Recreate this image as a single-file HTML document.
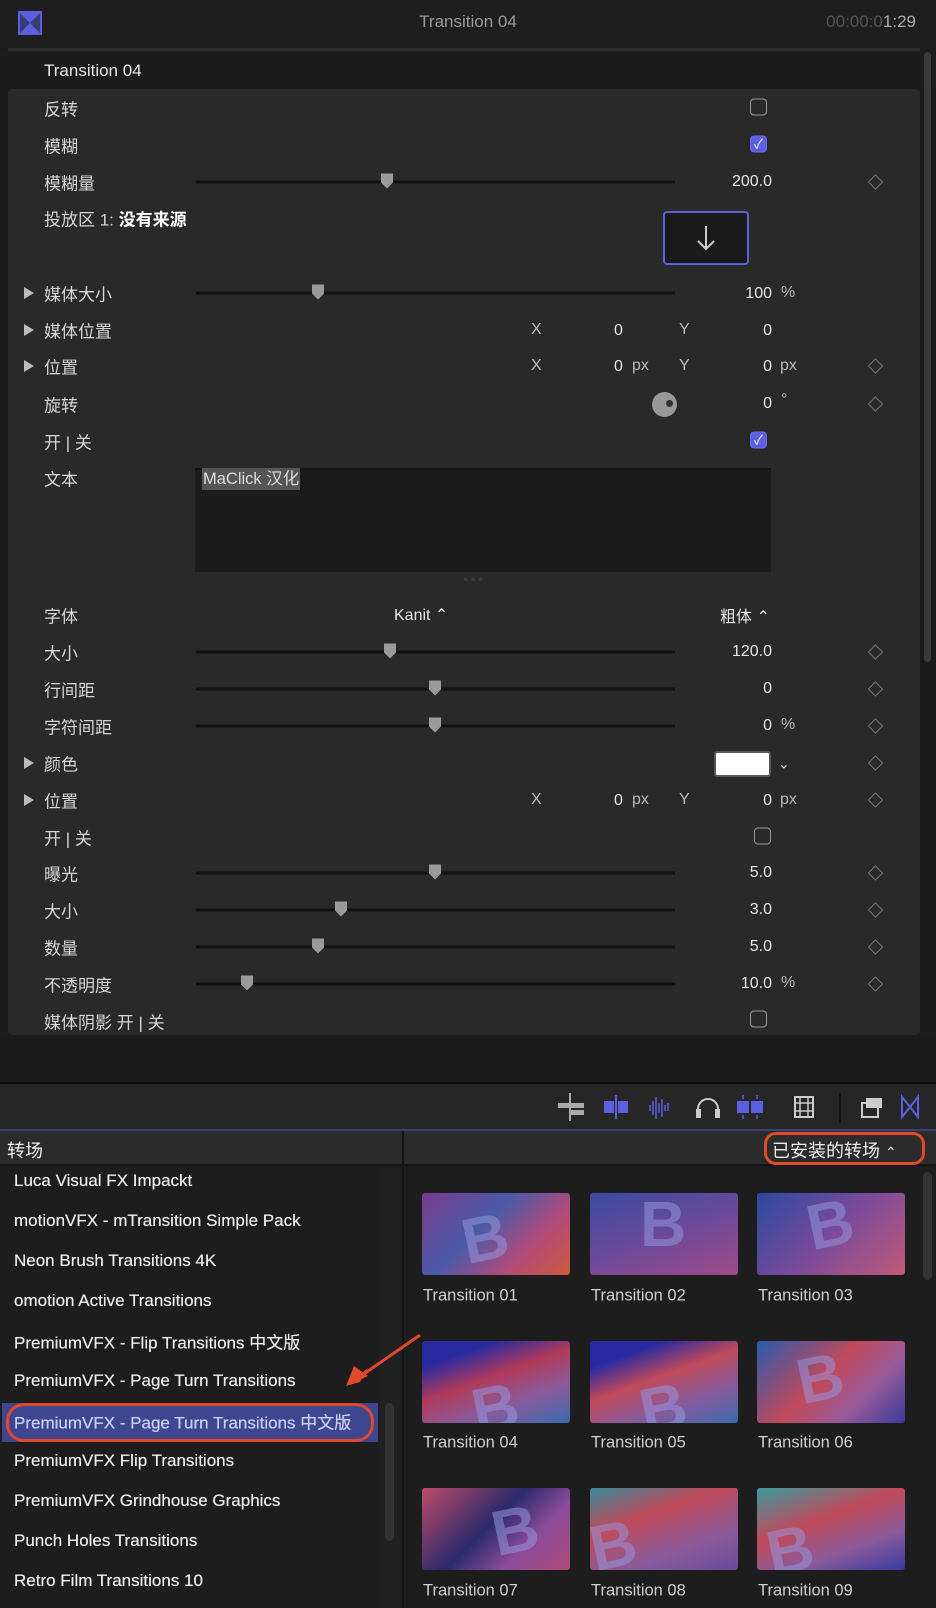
<!DOCTYPE html>
<html><head><meta charset="utf-8"><style>
*{margin:0;padding:0;box-sizing:border-box}
body{width:936px;height:1608px;background:#1b1b1b;position:relative;overflow:hidden;font-family:"Liberation Sans","Noto Sans CJK SC",sans-serif;color:#d8d8d8}
.a{position:absolute;white-space:nowrap}
.lbl{position:absolute;left:44px;font-size:17px;color:#d6d6d6;transform:translateY(-50%)}
.tri{position:absolute;left:24px;width:0;height:0;border-left:10px solid #bbb;border-top:6px solid transparent;border-bottom:6px solid transparent;transform:translateY(-50%)}
.trk{position:absolute;left:196px;width:479px;height:3px;background:#111;transform:translateY(-50%)}
.th{position:absolute;width:12px;height:15px;background:#9a9a9a;clip-path:polygon(0 0,100% 0,100% 60%,50% 100%,0 60%);transform:translate(-50%,-50%)}
.val{position:absolute;right:164px;font-size:16px;color:#e6e6e6;transform:translateY(-50%)}
.unit{position:absolute;font-size:16px;color:#bbb;transform:translateY(-50%)}
.dia{position:absolute;left:870px;width:11px;height:11px;border:1.5px solid #777;transform:translateY(-50%) rotate(45deg)}
.cb{position:absolute;left:750px;width:17px;height:17px;border:1.5px solid #999;border-radius:4px;transform:translateY(-50%)}
.cb.on{background:#5b5fe0;border-color:#6a6ef0;color:#fff;font-size:13px;text-align:center;line-height:15px}
.li{position:absolute;left:14px;font-size:17px;color:#ececec;transform:translateY(-50%);text-shadow:0 0 .4px #fff}
.tn{position:absolute;width:148px;height:82px;border-radius:3px;overflow:hidden}
.tn b{position:absolute;font-size:64px;font-family:"Liberation Sans",sans-serif;color:rgba(150,150,220,.55);left:40px;top:8px;transform:rotate(-12deg)}
.tl{position:absolute;font-size:16.5px;color:#cfcfcf;transform:translateY(-50%)}
</style></head><body>
<div class="a" style="left:0;top:0;width:936px;height:48px;background:#1e1e1e"></div>
<svg class="a" style="left:18px;top:11px" width="24" height="24"><rect width="24" height="24" fill="#5b5fe0"/><path d="M2 2 L12 12 L2 22 Z M22 2 L12 12 L22 22Z" fill="#1e1e1e" opacity=".55"/></svg>
<div class="a" style="left:0;width:936px;top:12px;text-align:center;font-size:17px;color:#9a9a9a">Transition 04</div>
<div class="a" style="right:20px;top:12px;font-size:17px;color:#555">00:00:0<span style="color:#aaa">1:29</span></div>
<div class="a" style="left:8px;top:48px;width:912px;height:3px;background:#2c2c2c"></div>
<div class="a" style="left:0;top:51px;width:936px;height:38px;background:#1c1c1c"></div>
<div class="a" style="left:44px;top:61px;font-size:17px;color:#e8e8e8">Transition 04</div>
<div class="a" style="left:8px;top:89px;width:912px;height:946px;background:#292929;border-radius:4px"></div>
<div class="a" style="left:924px;top:52px;width:7px;height:610px;background:#3a3a3a;border-radius:4px"></div>

<div class="lbl" style="top:108px">反转</div><div class="cb" style="top:107px"></div>
<div class="lbl" style="top:145px">模糊</div><div class="cb on" style="top:144px">✓</div>
<div class="lbl" style="top:182px">模糊量</div><div class="trk" style="top:182px"></div><div class="th" style="left:387px;top:181px"></div><div class="val" style="top:182px">200.0</div><div class="dia" style="top:182px"></div>
<div class="lbl" style="top:218px">投放区 1: <b style="color:#fff">没有来源</b></div>
<div class="a" style="left:663px;top:211px;width:86px;height:54px;border:2px solid #5b5fe0;border-radius:4px;background:#1a1a1a"></div>
<svg class="a" style="left:694px;top:224px" width="24" height="28"><path d="M12 2 V25 M4 17 L12 25 L20 17" stroke="#ccc" stroke-width="2" fill="none"/></svg>

<div class="tri" style="top:293px"></div><div class="lbl" style="top:293px">媒体大小</div><div class="trk" style="top:293px"></div><div class="th" style="left:318px;top:292px"></div><div class="val" style="top:294px">100</div><div class="unit" style="left:781px;top:293px">%</div>
<div class="tri" style="top:330px"></div><div class="lbl" style="top:330px">媒体位置</div>
<div class="unit" style="left:531px;top:330px">X</div><div class="unit" style="left:614px;top:331px;color:#e6e6e6">0</div><div class="unit" style="left:679px;top:330px">Y</div><div class="val" style="top:331px">0</div>
<div class="tri" style="top:366px"></div><div class="lbl" style="top:366px">位置</div>
<div class="unit" style="left:531px;top:366px">X</div><div class="unit" style="left:614px;top:367px;color:#e6e6e6">0</div><div class="unit" style="left:632px;top:366px">px</div><div class="unit" style="left:679px;top:366px">Y</div><div class="val" style="top:367px">0</div><div class="unit" style="left:780px;top:366px">px</div><div class="dia" style="top:366px"></div>
<div class="lbl" style="top:404px">旋转</div>
<div class="a" style="left:652px;top:392px;width:25px;height:25px;border-radius:50%;background:#999"></div><div class="a" style="left:666px;top:400px;width:7px;height:7px;border-radius:50%;background:#333"></div>
<div class="val" style="top:404px">0</div><div class="unit" style="left:781px;top:400px">°</div><div class="dia" style="top:404px"></div>
<div class="lbl" style="top:441px">开 | 关</div><div class="cb on" style="top:440px">✓</div>
<div class="lbl" style="top:478px">文本</div>
<div class="a" style="left:195px;top:468px;width:576px;height:104px;background:#1c1c1c;border-top:2px solid #151515"></div>
<div class="a" style="left:202px;top:468px;height:22px;padding:0 1px;background:#555;font-size:16.5px;color:#ddd;line-height:22px">MaClick 汉化</div>
<div class="a" style="left:463px;top:574px;font-size:9px;color:#3c3c3c;letter-spacing:2px">●●●</div>

<div class="lbl" style="top:615px">字体</div><div class="unit" style="left:394px;top:615px;color:#e6e6e6">Kanit ⌃</div><div class="unit" style="left:720px;top:615px;color:#e6e6e6">粗体 ⌃</div>
<div class="lbl" style="top:652px">大小</div><div class="trk" style="top:652px"></div><div class="th" style="left:390px;top:651px"></div><div class="val" style="top:652px">120.0</div><div class="dia" style="top:652px"></div>
<div class="lbl" style="top:689px">行间距</div><div class="trk" style="top:689px"></div><div class="th" style="left:435px;top:688px"></div><div class="val" style="top:689px">0</div><div class="dia" style="top:689px"></div>
<div class="lbl" style="top:726px">字符间距</div><div class="trk" style="top:726px"></div><div class="th" style="left:435px;top:725px"></div><div class="val" style="top:726px">0</div><div class="unit" style="left:781px;top:725px">%</div><div class="dia" style="top:726px"></div>
<div class="tri" style="top:763px"></div><div class="lbl" style="top:763px">颜色</div>
<div class="a" style="left:714px;top:751px;width:57px;height:26px;background:#fff;border:2px solid #555;border-radius:3px"></div><div class="unit" style="left:778px;top:764px;color:#ddd;font-size:14px">⌄</div><div class="dia" style="top:763px"></div>
<div class="tri" style="top:800px"></div><div class="lbl" style="top:800px">位置</div>
<div class="unit" style="left:531px;top:800px">X</div><div class="unit" style="left:614px;top:801px;color:#e6e6e6">0</div><div class="unit" style="left:632px;top:800px">px</div><div class="unit" style="left:679px;top:800px">Y</div><div class="val" style="top:801px">0</div><div class="unit" style="left:780px;top:800px">px</div><div class="dia" style="top:800px"></div>
<div class="lbl" style="top:837px">开 | 关</div><div class="cb" style="top:836px;left:754px"></div>
<div class="lbl" style="top:873px">曝光</div><div class="trk" style="top:873px"></div><div class="th" style="left:435px;top:872px"></div><div class="val" style="top:873px">5.0</div><div class="dia" style="top:873px"></div>
<div class="lbl" style="top:910px">大小</div><div class="trk" style="top:910px"></div><div class="th" style="left:341px;top:909px"></div><div class="val" style="top:910px">3.0</div><div class="dia" style="top:910px"></div>
<div class="lbl" style="top:947px">数量</div><div class="trk" style="top:947px"></div><div class="th" style="left:318px;top:946px"></div><div class="val" style="top:947px">5.0</div><div class="dia" style="top:947px"></div>
<div class="lbl" style="top:984px">不透明度</div><div class="trk" style="top:984px"></div><div class="th" style="left:247px;top:983px"></div><div class="val" style="top:984px">10.0</div><div class="unit" style="left:781px;top:983px">%</div><div class="dia" style="top:984px"></div>
<div class="lbl" style="top:1021px">媒体阴影 开 | 关</div><div class="cb" style="top:1019px"></div>

<div class="a" style="left:0;top:1035px;width:936px;height:47px;background:#1a1a1a"></div>
<div class="a" style="left:0;top:1082px;width:936px;height:2px;background:#0e0e0e"></div>
<div class="a" style="left:0;top:1084px;width:936px;height:45px;background:#262626"></div>
<div class="a" style="left:0;top:1129px;width:936px;height:2px;background:#3b3f7a"></div>
<svg class="a" style="left:554px;top:1093px" width="380" height="30">
<g fill="#aaa"><rect x="15" y="0" width="2" height="28"/><rect x="4" y="10" width="12" height="5"/><rect x="17" y="10" width="13" height="5"/><rect x="17" y="17" width="13" height="5"/></g>
<g fill="#5b5fe0"><rect x="50" y="8" width="10" height="12"/><rect x="64" y="8" width="10" height="12"/><rect x="61" y="2" width="2" height="24"/></g>
<g stroke="#5b5fe0" stroke-width="1.5"><path d="M96 12v6M99 8v14M102 4v22M105 10v10M108 6v18M111 12v6M114 10v8"/></g>
<path d="M144 24v-8a10 10 0 0 1 20 0v8" stroke="#ccc" stroke-width="2" fill="none"/><rect x="142" y="16" width="5" height="9" fill="#ccc"/><rect x="161" y="16" width="5" height="9" fill="#ccc"/>
<g fill="#5b5fe0"><rect x="183" y="8" width="12" height="12"/><rect x="197" y="8" width="12" height="12"/><path d="M189 2v4M203 2v4M189 22v4M203 22v4" stroke="#5b5fe0" stroke-width="1.5"/></g>
<rect x="241" y="4" width="18" height="20" fill="none" stroke="#ccc" stroke-width="2"/><path d="M246 4v20M254 4v20M241 10h18M241 18h18" stroke="#ccc" stroke-width="1.5"/>
<rect x="285" y="-1" width="2" height="32" fill="#111"/>
<rect x="308" y="10" width="16" height="14" fill="none" stroke="#ccc" stroke-width="2"/><rect x="312" y="5" width="16" height="10" fill="#ccc"/>
<path d="M348 4v20l16-20v20z" stroke="#5b5fe0" stroke-width="2" fill="none"/>
</svg>
<div class="a" style="left:0;top:1131px;width:936px;height:35px;background:#2b2b2b;border-bottom:2px solid #141414"></div>
<div class="a" style="left:402px;top:1131px;width:2px;height:477px;background:#141414"></div>
<div class="a" style="left:7px;top:1137px;font-size:18px;color:#eee">转场</div>
<div class="a" style="left:764px;top:1132px;width:161px;height:33px;border:3px solid #e04a2a;border-radius:12px"></div>
<div class="a" style="left:772px;top:1137px;font-size:18px;color:#eee">已安装的转场 <span style="font-size:14px">⌃</span></div>
<div class="a" style="left:0;top:1168px;width:402px;height:440px;background:#1d1d1d"></div>
<div class="a" style="left:380px;top:1168px;width:22px;height:440px;background:#202020"></div>
<div class="a" style="left:385px;top:1403px;width:9px;height:138px;background:#333;border-radius:5px"></div>
<div class="a" style="left:2px;top:1403px;width:376px;height:39px;background:#3f4690"></div>
<div class="a" style="left:6px;top:1403px;width:368px;height:39px;border:3px solid #e04a2a;border-radius:18px"></div>
<div class="li" style="top:1181px">Luca Visual FX Impackt</div>
<div class="li" style="top:1221px">motionVFX - mTransition Simple Pack</div>
<div class="li" style="top:1261px">Neon Brush Transitions 4K</div>
<div class="li" style="top:1301px">omotion Active Transitions</div>
<div class="li" style="top:1341px">PremiumVFX - Flip Transitions 中文版</div>
<div class="li" style="top:1381px">PremiumVFX - Page Turn Transitions</div>
<div class="li" style="top:1421px;color:#c8cdf5">PremiumVFX - Page Turn Transitions 中文版</div>
<div class="li" style="top:1461px">PremiumVFX Flip Transitions</div>
<div class="li" style="top:1501px">PremiumVFX Grindhouse Graphics</div>
<div class="li" style="top:1541px">Punch Holes Transitions</div>
<div class="li" style="top:1581px">Retro Film Transitions 10</div>
<div class="a" style="left:404px;top:1168px;width:532px;height:440px;background:#1d1d1d"></div>
<div class="a" style="left:923px;top:1172px;width:9px;height:108px;background:#333;border-radius:5px"></div>
<svg class="a" style="left:340px;top:1330px" width="90" height="62"><path d="M80 5 L18 48" stroke="#e04a2a" stroke-width="3"/><path d="M6 56 L28 38 L20 52 Z M6 56 L14 36 L28 46Z" fill="#e04a2a"/></svg>

<div class="tn" style="left:422px;top:1193px;background:linear-gradient(135deg,#7a3a8a,#4a5aa8 40%,#b04a7a 70%,#d05a3a)"><b>B</b></div>
<div class="tn" style="left:590px;top:1193px;background:linear-gradient(160deg,#3a4aa0,#6a4a9a 50%,#a04a8a)"><b style="transform:none;top:-6px;left:50px">B</b></div>
<div class="tn" style="left:757px;top:1193px;background:linear-gradient(135deg,#2a4aa0,#7a4a9a 50%,#c05a7a)"><b style="top:-6px;left:50px">B</b></div>
<div class="tn" style="left:422px;top:1341px;background:linear-gradient(160deg,#2a2aa0 20%,#b03a5a 45%,#8a5a9a 70%,#3a6ab0)"><b style="top:30px;left:50px">B</b></div>
<div class="tn" style="left:590px;top:1341px;background:linear-gradient(160deg,#2a2aa0 20%,#c04a5a 45%,#8a5a9a 70%,#3a6ab0)"><b style="top:30px;left:50px">B</b></div>
<div class="tn" style="left:757px;top:1341px;background:linear-gradient(135deg,#2a5ab0,#c04a5a 45%,#9a5a9a 70%,#3a3a9a)"><b style="top:0;left:40px">B</b></div>
<div class="tn" style="left:422px;top:1488px;background:linear-gradient(135deg,#c04a6a,#2a2a6a 45%,#8a4a9a 70%,#b04a7a)"><b style="top:5px;left:70px">B</b></div>
<div class="tn" style="left:590px;top:1488px;background:linear-gradient(160deg,#3a8a9a,#c04a5a 35%,#8a5a9a 70%,#6a4a9a)"><b style="top:20px;left:0">B</b></div>
<div class="tn" style="left:757px;top:1488px;background:linear-gradient(160deg,#3a9aa0,#c04a5a 40%,#8a5a9a 70%,#3a3aa0)"><b style="top:25px;left:10px">B</b></div>
<div class="tl" style="left:423px;top:1296px">Transition 01</div><div class="tl" style="left:591px;top:1296px">Transition 02</div><div class="tl" style="left:758px;top:1296px">Transition 03</div>
<div class="tl" style="left:423px;top:1443px">Transition 04</div><div class="tl" style="left:591px;top:1443px">Transition 05</div><div class="tl" style="left:758px;top:1443px">Transition 06</div>
<div class="tl" style="left:423px;top:1591px">Transition 07</div><div class="tl" style="left:591px;top:1591px">Transition 08</div><div class="tl" style="left:758px;top:1591px">Transition 09</div>
</body></html>
